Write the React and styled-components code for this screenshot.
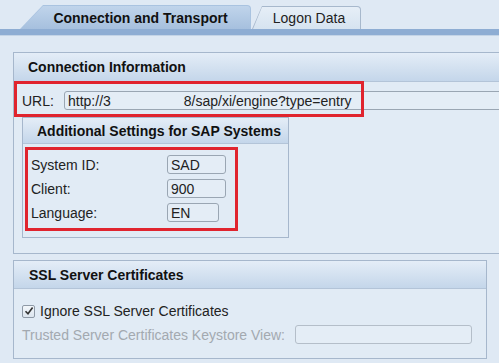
import React from "react";
import styled, { createGlobalStyle } from "styled-components";

const GlobalStyle = createGlobalStyle`
  html, body {
    margin: 0;
    padding: 0;
    background: #dfe9f4;
    overflow: hidden;
  }
  body {
    font-family: "Liberation Sans", Arial, sans-serif;
    font-size: 14px;
    color: #222;
  }
`;

const Page = styled.div`
  position: relative;
  width: 499px;
  height: 363px;
  overflow: hidden;
  background: #dfe9f4;
`;

// Tabs
const TabBar = styled.div`
  display: flex;
  align-items: flex-end;
  height: 29px;
  padding-left: 20px;
`;

const TabEdge = styled.div`
  height: ${(p) => (p.$active ? 24 : 23)}px;
  margin-left: ${(p) => (p.$active ? 0 : 1)}px;
  border-radius: 4px 4px 0 0;
  background: ${(p) => (p.$active ? "#a9c3e0" : "#a7b8cc")};
  clip-path: polygon(${(p) => p.$slant}px 0, 100% 0, 100% 100%, 0 100%);
  display: flex;
  padding: 1px 1px 0 1px;
  box-sizing: border-box;
`;

const TabFace = styled.div`
  flex: 1;
  display: flex;
  align-items: center;
  justify-content: center;
  border-radius: 3px 3px 0 0;
  clip-path: polygon(${(p) => p.$slant}px 0, 100% 0, 100% 100%, 0 100%);
  background: ${(p) =>
    p.$active
      ? "linear-gradient(#c0d4eb, #a6c0de)"
      : "linear-gradient(#e6eef7, #d6e3f0)"};
  font-weight: ${(p) => (p.$active ? "bold" : "normal")};
  color: ${(p) => (p.$active ? "#111" : "#222")};
  font-size: 14px;
  white-space: nowrap;
`;

const Strip = styled.div`
  height: 6px;
  background: #8eadd3;
  border-bottom: 1px solid #c4d4e6;
`;

const Content = styled.div`
  padding: 16px 0 0 13px;
`;

const Panel = styled.div`
  width: ${(p) => p.$width}px;
  border: 1px solid #a6b7cc;
  background: #e1ebf5;
  margin-top: ${(p) => p.$top || 0}px;
  margin-left: ${(p) => p.$left || 0}px;
  box-sizing: border-box;
`;

const PanelHeader = styled.div`
  height: ${(p) => p.$height}px;
  display: flex;
  align-items: center;
  padding-left: ${(p) => p.$indent}px;
  background: linear-gradient(#e4edf7, #c4d6ea);
  border-bottom: 1px solid #b3c4d8;
  font-weight: bold;
  color: #111;
  white-space: nowrap;
`;

const UrlRow = styled.div`
  display: flex;
  align-items: center;
  padding: 9px 0 7px 8px;
`;

const Label = styled.span`
  width: ${(p) => p.$width}px;
  flex-shrink: 0;
  white-space: nowrap;
  color: ${(p) => (p.$muted ? "#a3a9b0" : "#222")};
`;

const Field = styled.div`
  width: ${(p) => p.$width}px;
  height: 19px;
  box-sizing: border-box;
  border: 1px solid ${(p) => (p.$disabled ? "#b4bec9" : "#9aa6b3")};
  border-radius: 3px;
  background: #e4edf6;
  display: flex;
  align-items: center;
  padding-left: 3px;
  white-space: nowrap;
  color: #222;
  flex-shrink: 0;
`;

const Gap = styled.span`
  display: inline-block;
  width: ${(p) => p.$width}px;
`;

const SubBody = styled.div`
  display: flex;
  flex-direction: column;
  gap: 5px;
  padding: 11px 0 15px 8px;
`;

const FieldRow = styled.div`
  display: flex;
  align-items: center;
`;

const OuterBody = styled.div`
  padding: 0 0 15px 0;
`;

const SslBody = styled.div`
  display: flex;
  flex-direction: column;
  gap: 6px;
  padding: 14px 0 14px 8px;
`;

const CheckRow = styled.label`
  display: flex;
  align-items: center;
  gap: 5px;
  height: 16px;
`;

const Box = styled.span`
  width: 13px;
  height: 13px;
  box-sizing: border-box;
  border: 1px solid #8e99a6;
  border-radius: 2px;
  background: linear-gradient(#f2f6fa, #dde6ef);
  display: flex;
  align-items: center;
  justify-content: center;
`;

// red highlight boxes drawn over the form
const Mark = styled.div`
  position: absolute;
  left: ${(p) => p.$x}px;
  top: ${(p) => p.$y}px;
  width: ${(p) => p.$w}px;
  height: ${(p) => p.$h}px;
  border: 3px solid #e0242e;
  box-sizing: border-box;
  pointer-events: none;
`;

const settings = [
  { label: "System ID:", value: "SAD", width: 59 },
  { label: "Client:", value: "900", width: 59 },
  { label: "Language:", value: "EN", width: 52 },
];

export default function App() {
  return (
    <Page>
      <GlobalStyle />
      <TabBar>
        <TabEdge $active $slant={23} style={{ width: 231 }}>
          <TabFace $active $slant={22} style={{ paddingLeft: 22, paddingRight: 12 }}>
            Connection and Transport
          </TabFace>
        </TabEdge>
        <TabEdge $slant={10} style={{ width: 109 }}>
          <TabFace $slant={9} style={{ paddingLeft: 10, paddingRight: 5 }}>
            Logon Data
          </TabFace>
        </TabEdge>
      </TabBar>
      <Strip />
      <Content>
        <Panel $width={540}>
          <PanelHeader $height={28} $indent={14}>Connection Information</PanelHeader>
          <UrlRow>
            <Label $width={42}>URL:</Label>
            <Field $width={480}>
              <span>http://3</span>
              <Gap $width={73} />
              <span>8/sap/xi/engine?type=entry</span>
            </Field>
          </UrlRow>
          <OuterBody>
            <Panel $width={267} $left={8}>
              <PanelHeader $height={25} $indent={14}>
                Additional Settings for SAP Systems
              </PanelHeader>
              <SubBody>
                {settings.map((s) => (
                  <FieldRow key={s.label}>
                    <Label $width={136}>{s.label}</Label>
                    <Field $width={s.width}>{s.value}</Field>
                  </FieldRow>
                ))}
              </SubBody>
            </Panel>
          </OuterBody>
        </Panel>
        <Panel $width={474} $top={6}>
          <PanelHeader $height={27} $indent={15}>SSL Server Certificates</PanelHeader>
          <SslBody>
            <CheckRow>
              <Box>
                <svg width="10" height="10" viewBox="0 0 10 10">
                  <path d="M1.5 5.2 L4 7.8 L8.6 1.6" fill="none" stroke="#333" strokeWidth="1.6" />
                </svg>
              </Box>
              Ignore SSL Server Certificates
            </CheckRow>
            <FieldRow>
              <Label $width={273} $muted>Trusted Server Certificates Keystore View:</Label>
              <Field $width={177} $disabled />
            </FieldRow>
          </SslBody>
        </Panel>
      </Content>
      <Mark $x={14} $y={81} $w={350} $h={36} />
      <Mark $x={25} $y={147} $w={213} $h={84} />
    </Page>
  );
}
